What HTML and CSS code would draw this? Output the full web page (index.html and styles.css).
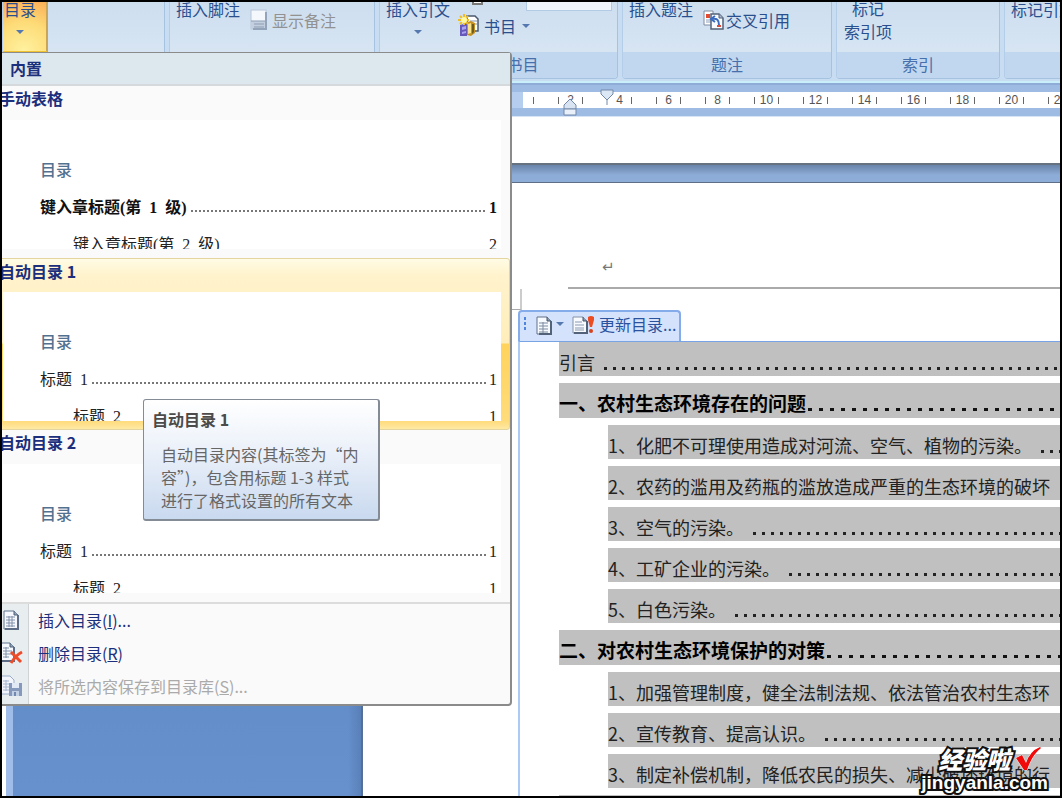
FILE: index.html
```html
<!DOCTYPE html>
<html lang="zh-CN">
<head>
<meta charset="utf-8">
<title>目录</title>
<link rel="stylesheet" href="styles.css">
</head>
<body>
<div class="frame">
  <header class="ribbon">
    <section class="group">
      <div class="tools">
        <button class="big toc-button" type="button">目录<span class="arrow"></span></button>
      </div>
      <div class="caption">目录</div>
    </section>
    <section class="group">
      <div class="tools">
        <button class="big" type="button">插入脚注</button>
        <button class="small show-notes" type="button" disabled>
          <svg width="18" height="22" viewBox="0 0 18 22"><rect x="1" y="1" width="15" height="19" fill="#f4f7fb" stroke="#b7c5d8"/><path d="M1 12h15v8H1z" fill="#c3cede"/><path d="M1 12h15M4 15h10M4 18h10" stroke="#8d9db5"/><path d="M16 3v17H3" fill="none" stroke="#93a3ba" stroke-width="2"/></svg>
          显示备注</button>
      </div>
      <div class="caption">脚注</div>
    </section>
    <section class="group">
      <div class="tools">
        <button class="big" type="button">插入引文<span class="arrow"></span></button>
        <div class="stack">
          <div class="style-row">
            <svg width="12" height="4" viewBox="0 0 12 4"><path d="M1 0v2h9V0" fill="#fff" stroke="#777" stroke-width="2"/></svg>
            <select class="style-select" aria-label="样式"><option></option></select>
          </div>
          <button class="small" type="button">
            <svg width="22" height="23" viewBox="0 0 22 23"><path d="M9 2h8l3 3v12H9z" fill="#fff" stroke="#4b596e" stroke-width="1.5"/><path d="M12 7h7M12 10h7" stroke="#8592a8"/><path d="M2 11l7-2v13H2z" fill="#6659ba"/><path d="M4 13l4-1v3l-4 1zM4 18l4-1v2l-4 1z" fill="#aaa3ef"/><path d="M9 8l4-1 4 2v10l-4 3-4-1z" fill="#c59120"/><path d="M10 10l3-1v10l-3 1z" fill="#f9e38a"/><path d="M14 10v10l2-2V10z" fill="#6e5920"/><path d="M6 0v11M0 6h11M2 2l8 8M10 2l-8 8" stroke="#efbd25" stroke-width="2"/><circle cx="6" cy="6" r="3" fill="#fff9a0"/></svg>
            书目<span class="arrow"></span></button>
        </div>
      </div>
      <div class="caption">引文与书目</div>
    </section>
    <section class="group">
      <div class="tools">
        <button class="big" type="button">插入题注</button>
        <button class="small cross-ref" type="button">
          <svg width="21" height="20" viewBox="0 0 21 20"><path d="M1 1h9v14H1z" fill="#fff" stroke="#7f8ca3"/><path d="M3 4h4v4H3z" fill="#e24a32"/><path d="M3 10h5M3 12h5" stroke="#8ca0bd"/><path d="M8 4h8l4 4v11H8z" fill="#f8fbff" stroke="#526178" stroke-width="1.5"/><path d="M16 4v4h4" fill="#a9b9ce" stroke="#526178"/><path d="M16 15c0-5-2-7-7-6m3-3L8 9l4 3" fill="none" stroke="#396bc0" stroke-width="2"/><path d="M14 15h4v2h-4z" fill="#d84c3d"/></svg>
          交叉引用</button>
      </div>
      <div class="caption">题注</div>
    </section>
    <section class="group">
      <div class="tools">
        <button class="big two-line" type="button">标记<br>索引项</button>
      </div>
      <div class="caption">索引</div>
    </section>
    <section class="group last">
      <div class="tools">
        <button class="big" type="button">标记引文</button>
      </div>
      <div class="caption"></div>
    </section>
  </header>

  <div class="ruler">
    <div class="track">
      <span class="cell blank"><i></i><i></i></span>
      <span class="cell"><i></i>2<i></i></span>
      <span class="cell first-line"><i></i>4<i></i></span>
      <span class="cell"><i></i>6<i></i></span>
      <span class="cell"><i></i>8<i></i></span>
      <span class="cell"><i></i>10<i></i></span>
      <span class="cell"><i></i>12<i></i></span>
      <span class="cell"><i></i>14<i></i></span>
      <span class="cell"><i></i>16<i></i></span>
      <span class="cell"><i></i>18<i></i></span>
      <span class="cell"><i></i>20<i></i></span>
      <span class="cell"><i></i>22<i></i></span>
    </div>
    <svg class="marker hanging" width="14" height="20" viewBox="0 0 14 20"><path d="M1 8l6-6 6 6v4H1z" fill="#d9e4f3" stroke="#7388a8"/><path d="M1 12h12v6H1z" fill="#e9f0fa" stroke="#7388a8"/></svg>
    <svg class="marker indent" width="14" height="18" viewBox="0 0 14 18"><path d="M7 10v6" stroke="#7388a8"/><path d="M1 1h12v4l-6 6-6-6z" fill="#dce7f5" stroke="#7388a8"/></svg>
  </div>

  <main class="workspace">
    <div class="edge"></div>
    <div class="side-bar"></div>
    <div class="desk"></div>
    <div class="pages">
      <div class="page-end"></div>
      <div class="page-gap"></div>
      <article class="page">
        <div class="page-header"><span class="return">↵</span></div>
        <div class="corner"></div>
        <div class="toc-tab">
          <span class="grip"></span>
          <button class="tab-button" type="button" aria-label="目录样式">
            <svg width="16" height="19" viewBox="0 0 16 19"><path d="M1 1h10l4 4v13H1z" fill="#f7faff" stroke="#607189"/><path d="M11 1v4h4" fill="#8c9db4" stroke="#46556b"/><path d="M3 7h9M3 10h9M3 13h9M3 16h9M7 6v11" stroke="#7b8b9f"/><path d="M15 5v13H3" fill="none" stroke="#526278" stroke-width="2"/></svg>
            <span class="arrow"></span></button>
          <button class="tab-button" type="button">
            <svg width="23" height="19" viewBox="0 0 23 19"><path d="M1 1h10l4 4v12H1z" fill="#f7faff" stroke="#8393a9"/><path d="M11 1v4h4" fill="#8c9db4" stroke="#46556b"/><path d="M3 6h7M3 9h9M3 12h9M3 14h9" stroke="#8b9aae"/><path d="M15 5v12H2" fill="none" stroke="#526278" stroke-width="2"/><path d="M16 1q3-2 6 0v3l-2 7h-2l-2-7z" fill="#ec4c22"/><circle cx="19" cy="15" r="2" fill="#d7421e"/></svg>
            更新目录...</button>
        </div>
        <div class="toc">
          <div class="entry">引言<span class="leader"></span></div>
          <div class="entry chapter">一、农村生态环境存在的问题<span class="leader"></span></div>
          <div class="entry item">1、化肥不可理使用造成对河流、空气、植物的污染。<span class="leader"></span></div>
          <div class="entry item">2、农药的滥用及药瓶的滥放造成严重的生态环境的破坏</div>
          <div class="entry item">3、空气的污染。<span class="leader"></span></div>
          <div class="entry item">4、工矿企业的污染。<span class="leader"></span></div>
          <div class="entry item">5、白色污染。<span class="leader"></span></div>
          <div class="entry chapter">二、对农村生态环境保护的对策<span class="leader"></span></div>
          <div class="entry item">1、加强管理制度，健全法制法规、依法管治农村生态环</div>
          <div class="entry item">2、宣传教育、提高认识。<span class="leader"></span></div>
          <div class="entry item">3、制定补偿机制，降低农民的损失、减少破坏环境的行</div>
          <div class="entry"></div>
        </div>
      </article>
    </div>
  </main>

  <div class="gallery">
    <h2 class="gallery-title">内置</h2>
    <section class="option">
      <h3 class="option-name">手动表格</h3>
      <div class="preview">
        <p class="preview-title">目录</p>
        <p class="line strong">键入章标题(第&nbsp; 1&nbsp; 级)<span class="dots"></span>1</p>
        <p class="line sub">键入章标题(第&nbsp; 2&nbsp; 级)<span class="space"></span>2</p>
      </div>
    </section>
    <section class="option selected">
      <h3 class="option-name">自动目录 1</h3>
      <div class="preview">
        <p class="preview-title">目录</p>
        <p class="line">标题&nbsp; 1<span class="dots"></span>1</p>
        <p class="line sub">标题&nbsp; 2<span class="space"></span>1</p>
      </div>
    </section>
    <section class="option">
      <h3 class="option-name">自动目录 2</h3>
      <div class="preview">
        <p class="preview-title">目录</p>
        <p class="line">标题&nbsp; 1<span class="dots"></span>1</p>
        <p class="line sub">标题&nbsp; 2<span class="space"></span>1</p>
      </div>
    </section>
    <div class="commands">
      <button class="command" type="button">
        <span class="command-icon"><svg width="24" height="22" viewBox="0 0 24 22"><path d="M5 2h10l4 4v14H5z" fill="#f5f9ff" stroke="#61748e"/><path d="M15 2v4h4" fill="#93a5bc" stroke="#4f6079"/><path d="M7 8h9M7 11h9M7 14h9M7 17h9M10 7v11M13 7v11" stroke="#8191aa"/><path d="M19 6v14H6" fill="none" stroke="#5c6d85" stroke-width="2"/></svg></span>
        <span>插入目录(<u>I</u>)...</span></button>
      <button class="command" type="button">
        <span class="command-icon"><svg width="24" height="22" viewBox="0 0 24 22"><path d="M2 1h9l4 4v14H2z" fill="#f5f9ff" stroke="#61748e"/><path d="M11 1v4h4" fill="#93a5bc" stroke="#4f6079"/><path d="M4 6h6M4 9h9M4 12h9M4 15h6M7 5v11" stroke="#8191aa"/><path d="M15 5v14H3" fill="none" stroke="#5c6d85" stroke-width="2"/><path d="M12 10l10 10M23 10q-6 3-11 11" fill="none" stroke="#ee4b2b" stroke-width="3"/></svg></span>
        <span>删除目录(<u>R</u>)</span></button>
      <button class="command" type="button" disabled>
        <span class="command-icon"><svg width="24" height="22" viewBox="0 0 24 22"><path d="M2 1h9l4 4v14H2z" fill="#f2f6fc" stroke="#9aacca"/><path d="M4 6h6M4 9h9M4 12h6M4 15h6M7 5v11" stroke="#a5b4cf"/><path d="M10 8h13v13H10z" fill="#8599bd"/><path d="M13 8h7v5h-7z" fill="#e1e9f6"/><path d="M13 16h7v5h-7z" fill="#c3cfe2"/><path d="M15 17h2v4h-2z" fill="#7188b0"/></svg></span>
        <span>将所选内容保存到目录库(<u>S</u>)...</span></button>
    </div>
  </div>

  <div class="tooltip" role="tooltip">
    <strong class="tooltip-title">自动目录 1</strong>
    <p class="tooltip-text">自动目录内容(其标签为“内<br>容”)，包含用标题 1-3 样式<br>进行了格式设置的所有文本</p>
  </div>

  <div class="watermark">
    <div class="brand">经验啦<svg width="27" height="26" viewBox="0 0 27 26"><path d="M1 12l6-3 4 8Q15 5 25 1l1 1Q17 9 12 24H9z" fill="#f00a0a" stroke="#fff" stroke-width="1"/></svg></div>
    <div class="site">jingyanla.com</div>
  </div>
</div>
</body>
</html>
```
FILE: styles.css
```css
* {
  box-sizing: border-box;
}

body {
  margin: 0;
  font: 16px/20px "Noto Sans CJK SC", sans-serif;
}

h2, h3, p {
  margin: 0;
}

button {
  margin: 0;
  padding: 0;
  border: 0;
  background: none;
  color: inherit;
  font: inherit;
  text-align: left;
}

svg {
  display: block;
  flex: none;
}

.frame {
  position: relative;
  display: flex;
  flex-direction: column;
  height: 100vh;
  border: 2px solid #000;
  overflow: hidden;
  background: #fff;
}

.arrow {
  width: 0;
  height: 0;
  border: 4px solid transparent;
  border-top-color: #5579ae;
  border-bottom: 0;
}

/* Ribbon */
.ribbon {
  display: grid;
  grid-template-columns: 163px 206px 239px 210px 164px 1fr;
  gap: 4px;
  padding-bottom: 2px;
  border-bottom: 2px solid #c9f0fa;
  background: #c9ddf2;
  color: #2a4f8e;
}

.group {
  min-width: 0;
  border: 1px solid #a5c2e0;
  border-top: 0;
  border-left-color: #b4cde8;
  border-radius: 0 0 4px 4px;
  overflow: hidden;
  background: linear-gradient(#cddeef, #d7e5f3 50px);
}

.group.last {
  border-right: 0;
  border-radius: 0 0 0 4px;
}

.tools {
  display: flex;
  height: 50px;
  padding-left: 6px;
  white-space: nowrap;
}

.caption {
  height: 26px;
  line-height: 24px;
  background: #c1d7ef;
  color: #466fab;
  text-align: center;
}

.big {
  display: flex;
  flex-direction: column;
  align-items: center;
  line-height: 14px;
}

.big .arrow {
  margin-top: 14px;
}

.toc-button {
  width: 46px;
  margin-left: -7px;
  padding-right: 8px;
  border-right: 2px solid #c9a558;
  border-bottom: 1px solid #f0c232;
  background: radial-gradient(circle at 50% 100%, #fff2a0, #fddb77 55%, #fbae57);
}

.two-line {
  display: block;
  align-self: flex-start;
  margin-top: -5px;
  padding-left: 1px;
  line-height: 23px;
  text-align: center;
}

.small {
  display: flex;
  align-items: center;
  gap: 4px;
}

.small .arrow {
  margin-left: 2px;
}

.show-notes,
.cross-ref {
  height: 22px;
  margin: 7px 0 0 10px;
}

.show-notes {
  color: #929292;
}

.cross-ref {
  gap: 2px;
}

.stack {
  display: flex;
  flex: 1;
  flex-direction: column;
  padding: 0 5px 0 8px;
}

.style-row {
  display: flex;
  justify-content: space-between;
  padding-left: 14px;
  height: 12px;
}

.style-select {
  width: 86px;
  height: 9px;
  border: 1px solid #b1cae6;
  border-top: 0;
  appearance: none;
  background: #f0f5fc;
}

/* Ruler */
.ruler {
  position: relative;
  flex: none;
  padding: 7px 0 8px;
  border-top: 2px solid #8facd8;
  border-bottom: 1px solid #d7e4f5;
  background: #9ebbe4;
}

.track {
  display: flex;
  padding-left: 495px;
  overflow: hidden;
  background: linear-gradient(90deg, #b5cef0 521px, #fff 521px);
}

.cell {
  display: flex;
  flex: none;
  align-items: center;
  justify-content: space-between;
  width: 49px;
  height: 16px;
  padding: 0 12px;
  color: #555;
  font: 12px/16px "Liberation Sans", sans-serif;
}

.cell i {
  width: 1px;
  height: 7px;
  background: #666;
}

.first-line i:first-child {
  visibility: hidden;
}

.marker {
  position: absolute;
}

.hanging {
  left: 561px;
  top: 12px;
}

.indent {
  left: 598px;
  top: 4px;
}

/* Document */
.workspace {
  display: grid;
  grid-template-columns: 4px 7px 350px 1fr;
  flex: 1;
  min-height: 0;
}

.side-bar {
  background: #9fbde8;
}

.desk {
  border-right: 2px solid #566f96;
  background: linear-gradient(90deg, transparent 335px, #4e71a680), linear-gradient(#4e78b0, #6791cd);
}

.pages {
  display: flex;
  flex-direction: column;
  min-width: 0;
  min-height: 0;
  overflow: hidden;
}

.page-end {
  flex: none;
  height: 46px;
}

.page-gap {
  flex: none;
  height: 20px;
  border-top: 2px solid #66727f;
  border-bottom: 1px solid #5e6e85;
  background: linear-gradient(#6984a9, #8dacd7 10px);
}

.page {
  display: flex;
  flex: none;
  flex-direction: column;
  padding-left: 155px;
}

.page-header {
  height: 106px;
  margin-left: 50px;
  padding: 74px 0 0 34px;
  border-bottom: 2px solid #aaa;
}

.return {
  display: block;
  color: #777;
  font: 15px/20px "DejaVu Sans", sans-serif;
}

.corner {
  width: 10px;
  height: 21px;
  margin-left: -6px;
  border-right: 2px solid #ccc;
  border-bottom: 1px solid #aaa;
}

.toc-tab {
  display: flex;
  align-items: center;
  align-self: flex-start;
  gap: 8px;
  height: 31px;
  padding: 0 3px 5px 4px;
  border: 1px solid #84aceb;
  border-width: 2px 2px 0;
  border-radius: 4px 4px 0 0;
  background: #d5e2fc;
  color: #2b529d;
}

.grip {
  width: 2px;
  height: 14px;
  margin-right: 2px;
  background: repeating-linear-gradient(#4d86dc 0 3px, transparent 3px 5px);
}

.tab-button {
  display: flex;
  align-items: center;
  gap: 4px;
  line-height: 18px;
  white-space: nowrap;
}

.tab-button svg {
  margin-top: 3px;
}

.toc {
  display: flex;
  flex-direction: column;
  gap: 7px;
  padding-left: 39px;
  border-top: 1px solid #78a3e5;
  border-left: 2px solid #adc9f5;
}

.entry {
  display: flex;
  flex: none;
  height: 34px;
  padding-top: 8px;
  background: #c0c0c0;
  color: #222;
  font-size: 18px;
  line-height: 24px;
  white-space: nowrap;
}

.chapter {
  height: 35px;
  color: #000;
  font-size: 19px;
  font-weight: 700;
}

.item {
  margin-left: 49px;
}

.leader {
  flex: 1;
  height: 3px;
  margin: 17px 0 0 9px;
  background: repeating-linear-gradient(90deg, #222 0 3px, transparent 3px 9px);
}

.chapter .leader {
  margin-left: 2px;
  background: repeating-linear-gradient(90deg, #111 0 4px, transparent 4px 11px);
}

/* Gallery menu */
.gallery {
  position: absolute;
  top: 50px;
  left: -4px;
  width: 514px;
  border: 1px solid #8b8b8b;
  border-width: 1px 2px 2px 1px;
  border-radius: 4px;
  background: #fafafa;
  color: #1c2f7c;
}

.gallery-title {
  height: 33px;
  padding-left: 11px;
  border-bottom: 2px solid #d5d9dc;
  background: #dde7ee;
  font-size: 16px;
  line-height: 30px;
}

.option {
  height: 172px;
  padding: 0 9px 9px 4px;
}

.option.selected {
  border: 1px solid #e3d4a0;
  padding: 0 8px 7px 3px;
  border-radius: 3px;
  background: linear-gradient(#fffbe5, #fff3cd 16px, #ffeeba 84px, #ffd35c 85px, #ffdc7b 162px, #ffe9a4);
}

.option-name {
  height: 34px;
  margin-left: -4px;
  font-size: 16px;
  line-height: 24px;
}

.selected .option-name {
  height: 33px;
}

.preview {
  height: 129px;
  padding: 32px 4px 0 37px;
  overflow: hidden;
  background: #fff;
  color: #222;
  font: 16px/37px "Liberation Serif", "Noto Sans CJK SC", serif;
}

.preview-title {
  color: #52708f;
  font-weight: 500;
}

.line {
  display: flex;
}

.strong {
  color: #111;
  font-weight: 700;
}

.sub {
  padding-left: 33px;
}

.dots {
  flex: 1;
  height: 2px;
  margin: 21px 2px 0 4px;
  background: repeating-linear-gradient(90deg, #777 0 2px, transparent 2px 4px);
}

.space {
  flex: 1;
}

.commands {
  padding-bottom: 1px;
  border-top: 2px solid #dcdcdc;
  background: linear-gradient(90deg, #e8eeef 29px, #d0d3d5 29px 30px, transparent 30px);
}

.command {
  display: flex;
  align-items: center;
  width: 100%;
  height: 33px;
  padding-bottom: 2px;
}

.command:disabled {
  color: #aaa;
}

.command-icon {
  width: 39px;
}

/* Tooltip */
.tooltip {
  position: absolute;
  top: 397px;
  left: 141px;
  width: 237px;
  padding: 9px 8px 7px;
  border: 1px solid #858b94;
  border-width: 1px 2px 2px 1px;
  border-radius: 3px;
  background: linear-gradient(#fff, #eaf0f9 45%, #c9d9ef);
  color: #666;
}

.tooltip-title {
  color: #4b4b4b;
}

.tooltip-text {
  padding: 14px 0 0 9px;
  line-height: 23px;
  white-space: nowrap;
}

/* Watermark */
.watermark {
  position: absolute;
  right: 12px;
  bottom: 2px;
  color: #fff;
  font-weight: 900;
  -webkit-text-stroke: 4px #111;
  paint-order: stroke;
}

.brand {
  display: flex;
  gap: 5px;
  padding-left: 17px;
  font-size: 24px;
  font-style: italic;
  line-height: 26px;
}

.site {
  font: 700 19px/22px "Liberation Sans", sans-serif;
}
```
